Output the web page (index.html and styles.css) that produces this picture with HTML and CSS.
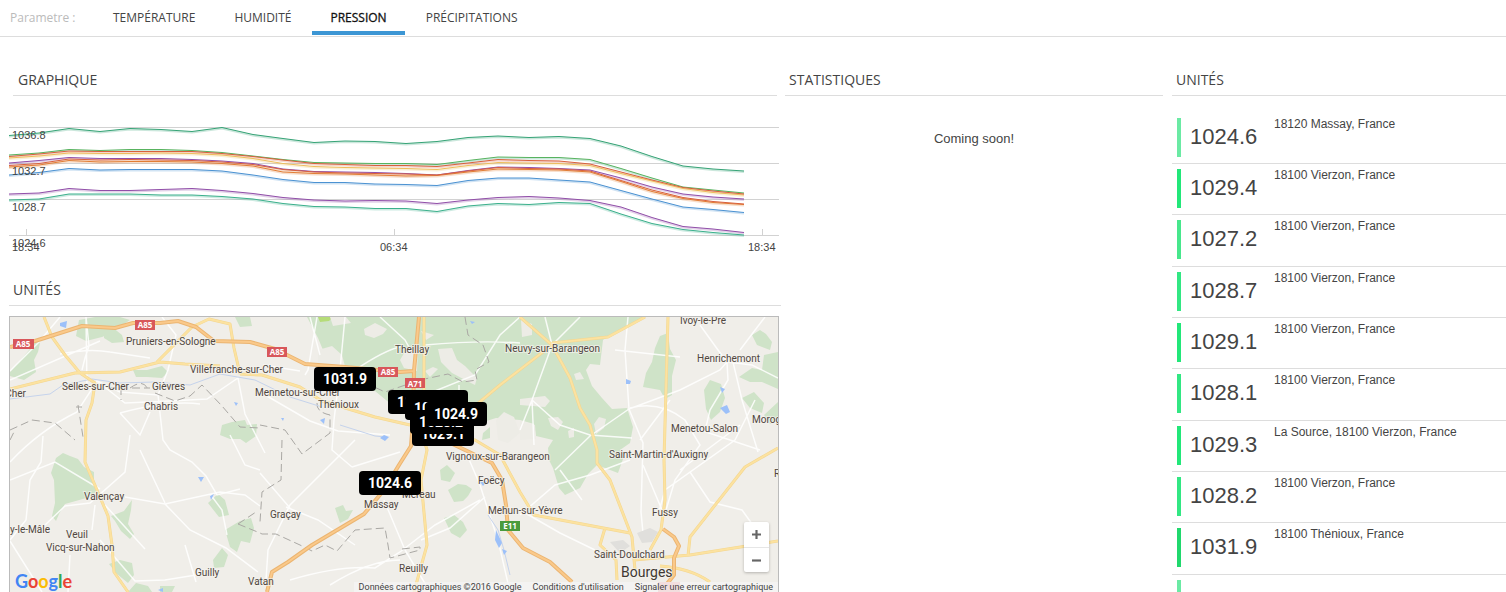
FILE: index.html
```html
<!DOCTYPE html>
<html lang="fr">
<head>
<meta charset="utf-8">
<title>Pression</title>
<link rel="stylesheet" href="styles.css">
</head>
<body>
<nav class="params">
  <span class="params-label">Parametre :</span>
  <div class="tabs">
    <button class="tab" type="button">TEMPÉRATURE</button>
    <button class="tab" type="button">HUMIDITÉ</button>
    <button class="tab tab-active" type="button">PRESSION</button>
    <button class="tab" type="button">PRÉCIPITATIONS</button>
  </div>
</nav>
<main class="board">
  <div class="col-main">
    <section class="panel-chart">
      <h2 class="title title-inset">GRAPHIQUE</h2>
      <svg class="chart" viewBox="9 116 770 144" role="img" aria-label="Pression par unité">
        <defs>
          <path id="s1" d="M9 135.5L39 133L69 128.5L100 131.5L130 128.5L161 129.5L192 131.5L222 127.5L253 134.5L283 138.5L314 142.5L345 141L375 141.5L406 143.5L437 141.5L468 137.5L498 136L529 137.5L559 136.5L590 138.5L621 146L652 156.5L683 166L713 169L744 171"/>
          <path id="s2" d="M9 155L39 153L69 149.5L100 150.5L130 149.5L161 149.5L192 150.5L222 152.5L253 156L283 159.5L314 162.5L345 163L375 163.5L406 163.5L437 164.5L468 160.5L498 157L529 157.5L559 157.5L590 159.5L621 168.5L652 178L683 187L713 190L744 193"/>
          <path id="s3" d="M9 156.5L39 154L69 151L100 151.5L130 151.5L161 151.5L192 151.5L222 153.5L253 156.5L283 160L314 163.5L345 164.5L375 165.5L406 165.5L437 166.5L468 163L498 159.5L529 160.5L559 161L590 164L621 172L652 180L683 187.5L713 191L744 194"/>
          <path id="s4" d="M9 158L39 156L69 153L100 153.5L130 153.5L161 153L192 153.5L222 155L253 158.5L283 163.5L314 166.5L345 167.5L375 168L406 168.5L437 169.5L468 165.5L498 162.5L529 163L559 163.5L590 165.5L621 173.5L652 181L683 188.5L713 192.5L744 195"/>
          <path id="s5" d="M9 163L39 160.5L69 157.5L100 158.5L130 158.5L161 158.5L192 159.5L222 161L253 163.5L283 169L314 171.5L345 172L375 172.5L406 173.5L437 175L468 170.5L498 167L529 167.5L559 168.5L590 170L621 178L652 187L683 194L713 197L744 199"/>
          <path id="s6" d="M9 165.5L39 163.5L69 159L100 160L130 159.5L161 160L192 160.5L222 162L253 164.5L283 169.5L314 172L345 173L375 173.5L406 174L437 175L468 171L498 167.5L529 168.5L559 169L590 171L621 180.5L652 190L683 197.5L713 201.5L744 204"/>
          <path id="s7" d="M9 167L39 165L69 160.5L100 162L130 161.5L161 161.5L192 162L222 163.5L253 166L283 172L314 173.5L345 174L375 175L406 176L437 175.5L468 172L498 169L529 169.5L559 170L590 172L621 181.5L652 191.5L683 198.5L713 202.5L744 204.5"/>
          <path id="s8" d="M9 175L39 172.5L69 168.5L100 170L130 169.5L161 169.5L192 169.5L222 171L253 175L283 179.5L314 182.5L345 182.5L375 184L406 184.5L437 185.5L468 180.5L498 178L529 178L559 180L590 182L621 190.5L652 199L683 207L713 209.5L744 212.5"/>
          <path id="s9" d="M9 194L39 193L69 188.5L100 190.5L130 190.5L161 189.5L192 188.5L222 190.5L253 193.5L283 197.5L314 200L345 201L375 200.5L406 201L437 203.5L468 200L498 197.5L529 196.5L559 198L590 200.5L621 207L652 217.5L683 226.5L713 229L744 232.5"/>
          <path id="s10" d="M9 200L39 199L69 194L100 194L130 194L161 195L192 195L222 196.5L253 199L283 203.5L314 206.5L345 207L375 208.5L406 208.5L437 211.5L468 206L498 203.5L529 204.5L559 202.5L590 203.5L621 214L652 223.5L683 229.5L713 232.5L744 235"/>
        </defs>
        <path class="gridline" d="M9 127.500H779M9 163.500H779M9 199.500H779M9 235.500H779M26.500 229V235M394.500 229V235M762.500 229V235"/>
        <g class="glow">
          <use href="#s1" class="c-green"/><use href="#s2" class="c-green"/><use href="#s3" class="c-red"/><use href="#s4" class="c-yellow"/><use href="#s5" class="c-purple"/><use href="#s6" class="c-orange"/><use href="#s7" class="c-orange"/><use href="#s8" class="c-blue"/><use href="#s9" class="c-purple"/><use href="#s10" class="c-teal"/>
        </g>
        <g class="series">
          <use href="#s1" class="c-green"/><use href="#s2" class="c-lime"/><use href="#s4" class="c-yellow"/><use href="#s3" class="c-red"/><use href="#s5" class="c-purple"/><use href="#s7" class="c-orange"/><use href="#s6" class="c-red"/><use href="#s8" class="c-blue"/><use href="#s9" class="c-purple"/><use href="#s10" class="c-teal"/>
        </g>
        <g class="axis">
          <text x="12" y="139">1036.8</text><text x="12" y="175">1032.7</text><text x="12" y="211">1028.7</text><text x="12" y="247">1024.6</text>
          <text x="12" y="251">18:34</text><text x="380" y="251">06:34</text><text x="748" y="251">18:34</text>
        </g>
      </svg>
    </section>
    <section class="panel-map">
      <h2 class="title">UNITÉS</h2>
      <div class="map">
        <svg class="map-canvas" viewBox="10 317 768 276" preserveAspectRatio="xMidYMin slice" role="img" aria-label="Carte des unités">
          <g class="wood">
            <path d="M307 317L318 338L323 350L317 370L345 388L375 391L392 405L420 425L445 430L480 423L496 418L520 420L534 424L536 436L553 440L548 448L549 460L553 468L559 488L565 495L580 488L588 474L597 465L618 473L623 459L620 450L630 443L633 427L627 408L612 409L602 398L592 386L586 370L590 364L600 365L603 340L609 336L622 330L646 317Z"/>
            <path d="M76 336L79 320L95 317L112 317L119 320L116 331L102 337L86 341ZM10 372L30 349L36 340L40 343L38 352L34 360L36 372L24 380L10 376ZM104 332L112 327L122 335L124 342L112 343L104 338ZM133 370L147 370L162 366L168 372L162 378L147 377L136 377ZM105 317H120L130 320L121 326L110 325Z"/>
            <path d="M220 435L222 425L232 422L245 420L247 425L257 424L256 436L246 443L236 436ZM235 317H250L252 326L240 327Z"/>
            <path d="M51 473L56 458L63 453L70 456L78 459L84 467L94 472L94 484L98 490L90 497L65 504L59 514L56 521L52 516L55 503L54 480ZM111 516L124 511L132 500L131 510L128 524L134 534L130 539L121 531L115 521ZM109 564L120 560L132 563L134 575L128 583L117 574ZM128 592L136 583L148 586L152 592Z"/>
            <path d="M208 503L218 494L225 500L229 515L219 517ZM225 530L240 521L251 518L254 528L250 543L241 541L237 552L230 547ZM213 560L222 548L228 555L224 567L214 568ZM160 586L175 586L172 592H160ZM220 435H252L242 439L230 439Z"/>
            <path d="M440 470L447 465L455 473L450 482L441 480ZM448 490L458 484L466 485L472 489L468 496L463 501L454 502ZM444 518L454 515L463 522L467 530L460 538L451 533ZM335 508L343 505L346 511L353 510L348 519L340 523Z"/>
            <path d="M660 336L668 333L670 349L676 360L672 376L672 395L665 399L660 390L643 387L646 373L652 362L655 348ZM704 390L710 380L721 384L725 398L720 412L711 420L706 409ZM752 335L760 330L766 334L772 342L770 350L757 345ZM739 377L752 368L762 370L764 355L778 352V389L762 382L750 382ZM742 398L754 392L764 403L762 413L750 408ZM764 415L778 402V420L770 424ZM483 433L490 427L490 438L482 440Z"/>
          </g>
          <path class="lime-patch" d="M318 317H333L329 321L320 322Z"/>
          <g class="clearing">
            <path d="M330 317H346L351 323L333 326ZM364 329L375 323L387 329L383 334L374 338L365 335ZM318 350L332 346L342 355L346 370L330 374L318 368ZM400 360L406 350L418 350L417 371L404 368ZM438 349L452 348L457 360L465 366L477 378L475 385L467 381L452 373L441 362ZM425 371L433 367L438 369L430 377ZM421 331L434 335L426 340ZM521 320L532 324L532 335L522 337ZM574 374L580 372L584 379L576 380ZM520 399L545 396L550 401L545 407L520 405ZM520 421L535 425L536 439L520 440ZM548 418L558 417L563 422L558 430L551 426ZM594 424L599 417L606 419L604 428L596 434ZM496 420L504 412L514 417L520 433L508 443L498 440ZM568 431L574 428L574 437L569 438Z"/>
          </g>
          <g class="minor">
            <path d="M86 317L89 346L85 358L82 370M86 317L87 390M162 317L176 335L168 370L158 395L120 392L97 381M10 371L38 343L60 317M60 354Q90 348 110 352L150 358M10 380L100 341M10 462Q40 430 77 412L97 381L125 403L170 401L207 399L238 378L245 414L265 453M120 413Q170 400 200 404M158 395L163 440L170 450L192 462L206 476L217 495L240 489M120 413L140 435L150 412"/>
            <path d="M43 436L41 462L30 480L26 520L10 540M130 435L125 472L90 503L65 506L45 525M10 480L55 462L100 489M95 505L92 530M125 497L165 504L220 492L245 495L260 506M165 504L190 530L226 548L258 572M185 545L196 582M70 555L68 592M100 540L135 581L165 580L196 575M210 494L222 510L227 535M10 541L42 592M140 450L165 503M230 435L245 465L260 470M105 505L145 549"/>
            <path d="M317 317L308 370L305 375M263 365L300 371M345 317L340 370L334 420L332 450L352 467M310 317L320 355M355 370Q385 350 400 347M380 317L392 328L405 340L410 349M425 345Q480 340 520 343M425 395L475 375L500 335L520 317M338 431L310 421L260 392M338 431L390 435M459 385V410M355 440L290 505L268 550L266 580M352 467L400 452M286 507L318 520L355 545M260 473L290 508M290 580Q340 565 375 568L400 552L435 525L480 500M384 500L405 550L430 592M421 540L450 528L485 497M465 450L480 485L488 510L498 540L510 592M330 585Q370 560 400 560"/>
            <path d="M552 345L532 400L520 430M552 345L545 317M552 345L580 317M628 317L625 350L629 409L590 436L555 470M629 409L680 390L720 370L727 362L718 350L700 325M629 409L643 443L641 512L643 533M532 400L560 425L590 435L632 438M630 408Q660 400 685 420L700 445L675 480L666 510M727 362L728 380L710 410L705 431M733 362L742 400L758 452M727 362L752 365L778 378M740 350L765 317M615 350L680 357M532 400L534 445M520 510L560 533L595 550M520 515L555 485L590 475L630 460M690 472L710 502L742 510L760 535M670 400L640 440M755 400L735 440L665 490L658 515M680 470L740 425M700 430L760 450M560 470L582 500M643 465L665 517"/>
          </g>
          <g class="border"><path d="M10 430L32 420L55 423L75 440M78 405L83 437M76 407H82M108 388H150M130 388Q144 378 148 390M155 393L175 401L190 396L202 385L222 406L240 427L260 428M121 387V400M465 317L468 335L483 345L489 362L475 370L477 380L463 382L448 374L420 380L385 392L370 385M317 403Q316 412 330 415L330 433L302 454L285 430L260 425M282 440L281 480L262 492L260 522M238 524L256 512M238 524L260 533L262 534H276L300 545L312 551L325 545L337 551L355 530L385 528L388 545L390 558L420 550L420 547L402 549M10 440L15 430"/></g>
          <g class="river"><path d="M10 399L50 394L63 385L92 379L120 383L154 382L190 385L220 374L255 380L290 397L322 407M488 515L498 530L504 550L510 575M340 425L375 436L386 437"/></g>
          <g class="lake"><path d="M60 323L67 321L66 328L60 326ZM384 435L389 437L385 441L380 438ZM720 408L727 405L730 412L726 414ZM720 387L725 389L722 393ZM626 379L631 381L630 384L626 384ZM198 477L204 477L201 482ZM210 496L214 494L211 500ZM158 590L163 588V592ZM234 402L238 403L236 406ZM281 418L284 418L283 421ZM320 420L325 418L324 424ZM480 482L487 481L483 486ZM496 530L502 543L499 548L495 540ZM502 549L507 551L504 555ZM470 321L475 322L472 324Z"/></g>
          <g class="urban"><path d="M637 533L650 528L658 532L652 542L642 543ZM610 542L623 540L630 546L620 553Z"/></g>
          <g class="road-edge">
            <path id="main-roads" d="M44 317L52 337L65 355L80 373L95 383L92 403L86 420L85 462L97 490L108 516L112 545L114 572L128 592M10 389L75 373L120 372L160 362L185 364L220 366M157 362L192 327L209 319L230 324L234 348L240 374M240 374L262 375L300 387L322 401L375 417L410 425M424 317V400M424 440L427 450L421 480L427 545L414 592M520 317L552 345L570 378L580 408L590 425L597 450L597 463L610 480L632 537L635 570M552 343L608 337L645 317M440 435L500 385L552 345M668 317L664 460L665 500L661 530L650 550M430 437L475 440L500 455L520 492L534 515L630 533M778 448L745 467L690 537L688 556M634 560L690 555L778 541M605 528L600 545L616 560L617 580M660 566Q690 568 710 582"/>
          </g>
          <g class="road-fill"><use href="#main-roads"/></g>
          <g class="mway-edge">
            <path id="motorways" d="M10 347L35 341L82 326L115 328L133 323L160 323L178 321L196 327L214 341L250 342L275 349L305 364L345 367L400 372L414 371L419 317M414 371L413 420L411 446L399 465L384 490L364 514L312 545L288 562L272 572L267 592M440 438L465 450L492 463L502 480L506 505L508 530L523 548L550 562L572 582M663 529L674 537L679 546L674 558L674 575L666 585"/>
          </g>
          <g class="mway-fill"><use href="#motorways"/></g>
          <g class="shield">
            <rect x="135" y="320" width="20" height="10"/><rect x="13" y="339" width="21" height="10"/><rect x="267" y="347" width="20" height="10"/><rect x="378" y="367" width="20" height="10"/><rect x="405" y="378" width="20" height="10"/><rect class="faint" x="658" y="582" width="22" height="10"/>
            <rect class="euro" x="500" y="521" width="20" height="10"/>
            <text x="145" y="328">A85</text><text x="23" y="347">A85</text><text x="277" y="355">A85</text><text x="388" y="375">A85</text><text x="415" y="387">A71</text><text x="510" y="529">E11</text>
          </g>
          <g class="place">
            <text x="126" y="345">Pruniers-en-Sologne</text><text x="190" y="373">Villefranche-sur-Cher</text><text x="62" y="390">Selles-sur-Cher</text><text x="152" y="390">Gièvres</text><text x="144" y="410">Chabris</text><text class="end" x="26" y="397">Cher</text>
            <text x="255" y="396">Mennetou-sur-Cher</text><text x="318" y="408">Thénioux</text><text x="395" y="353">Theillay</text><text x="505" y="352">Neuvy-sur-Barangeon</text><text x="680" y="324">Ivoy-le-Pré</text><text x="697" y="362">Henrichemont</text><text x="671" y="432">Menetou-Salon</text><text x="752" y="423">Morogues</text><text x="609" y="458">Saint-Martin-d'Auxigny</text><text x="446" y="460">Vignoux-sur-Barangeon</text><text x="478" y="484">Foëcy</text><text x="402" y="498">Méreau</text><text x="364" y="508">Massay</text><text x="270" y="518">Graçay</text><text x="84" y="500">Valençay</text><text class="end" x="50" y="533">Luçay-le-Mâle</text><text x="66" y="538">Veuil</text><text x="46" y="551">Vicq-sur-Nahon</text><text x="195" y="576">Guilly</text><text x="248" y="585">Vatan</text><text x="488" y="514">Mehun-sur-Yèvre</text><text x="652" y="516">Fussy</text><text x="594" y="558">Saint-Doulchard</text><text x="399" y="572">Reuilly</text><text x="774" y="477">Rians</text>
            <text class="city" x="621" y="577">Bourges</text>
          </g>
          <g class="pin">
            <g><rect x="314" y="367" width="62" height="24" rx="4"/><text x="345" y="384">1031.9</text></g>
            <g><rect x="388" y="390" width="62" height="24" rx="4"/><text x="419" y="407">1028.7</text></g>
            <g><rect x="406" y="390" width="62" height="24" rx="4"/><text x="437" y="407">1029.4</text></g>
            <g><rect x="405" y="396" width="62" height="24" rx="4"/><text x="436" y="413">1029.3</text></g>
            <g><rect x="412" y="422" width="62" height="24" rx="4"/><text x="443" y="439">1029.1</text></g>
            <g><rect x="410" y="410" width="62" height="24" rx="4"/><text x="441" y="427">1028.2</text></g>
            <g><rect x="425" y="402" width="62" height="24" rx="4"/><text x="456" y="419">1024.9</text></g>
            <g><rect x="359" y="471" width="62" height="24" rx="4"/><text x="390" y="488">1024.6</text></g>
          </g>
        </svg>
        <div class="zoom">
          <button class="zoom-btn" type="button" aria-label="Zoom avant"><svg viewBox="0 0 10 10"><path d="M5 0V10M0 5H10"/></svg></button>
          <button class="zoom-btn" type="button" aria-label="Zoom arrière"><svg viewBox="0 0 10 10"><path d="M0 5H10"/></svg></button>
        </div>
        <div class="map-foot">
          <a class="logo" href="#"><span class="g-blue">G</span><span class="g-red">o</span><span class="g-yellow">o</span><span class="g-blue">g</span><span class="g-green">l</span><span class="g-red">e</span></a>
          <div class="legal"><span>Données cartographiques ©2016 Google</span><a href="#">Conditions d'utilisation</a><a href="#">Signaler une erreur cartographique</a></div>
        </div>
      </div>
    </section>
  </div>
  <section class="col-stats">
    <h2 class="title">STATISTIQUES</h2>
    <p class="soon">Coming soon!</p>
  </section>
  <section class="col-units">
    <h2 class="title">UNITÉS</h2>
    <ul class="units">
      <li class="unit"><span class="bar b1"></span><span class="value">1024.6</span><span class="address">18120 Massay, France</span></li>
      <li class="unit"><span class="bar b4"></span><span class="value">1029.4</span><span class="address">18100 Vierzon, France</span></li>
      <li class="unit"><span class="bar b2"></span><span class="value">1027.2</span><span class="address">18100 Vierzon, France</span></li>
      <li class="unit"><span class="bar b3"></span><span class="value">1028.7</span><span class="address">18100 Vierzon, France</span></li>
      <li class="unit"><span class="bar b4"></span><span class="value">1029.1</span><span class="address">18100 Vierzon, France</span></li>
      <li class="unit"><span class="bar b3"></span><span class="value">1028.1</span><span class="address">18100 Vierzon, France</span></li>
      <li class="unit"><span class="bar b4"></span><span class="value">1029.3</span><span class="address">La Source, 18100 Vierzon, France</span></li>
      <li class="unit"><span class="bar b3"></span><span class="value">1028.2</span><span class="address">18100 Vierzon, France</span></li>
      <li class="unit"><span class="bar b5"></span><span class="value">1031.9</span><span class="address">18100 Thénioux, France</span></li>
      <li class="unit"><span class="bar b1"></span></li>
    </ul>
  </section>
</main>
</body>
</html>
```
FILE: styles.css
```css
* { box-sizing: border-box; }

body {
  margin: 0;
  height: 100vh;
  overflow: hidden;
  background: #fff;
  color: #444;
  font: 12px "Liberation Sans", Arial, sans-serif;
}

.params {
  display: flex;
  height: 37px;
  padding-left: 10px;
  border-bottom: 1px solid #ddd;
  font-family: "Open Sans", sans-serif;
}
.params-label { width: 85px; line-height: 35px; color: #bbb; }
.tabs { display: flex; gap: 3px; }
.tab {
  height: 35px;
  padding: 4px 18px 0;
  border: 0;
  border-bottom: 4px solid transparent;
  background: none;
  color: #444;
  font: 12px "Open Sans", sans-serif;
}
.tab-active { border-color: #3c96d4; color: #111; -webkit-text-stroke: 0.3px #111; }

.board {
  display: grid;
  grid-template-columns: 781fr 382fr 343fr;
  padding-top: 28px;
}
.title {
  margin: 0;
  height: 31px;
  padding-left: 4px;
  border-bottom: 1px solid #ddd;
  color: #444;
  font: 14px/30px "Open Sans", sans-serif;
}
.title-inset { margin: 0 4px; padding-left: 5px; }

.col-main { display: flex; flex-direction: column; gap: 15px; padding-left: 9px; }
.panel-chart { display: flex; flex-direction: column; gap: 20px; }
.chart { display: block; width: calc(100% - 2px); }
.gridline { fill: none; stroke: #d2d2d2; shape-rendering: crispEdges; }
.series, .glow { fill: none; stroke-width: 1; }
.glow { stroke-width: 2; opacity: 0.25; transform: translateY(1px); }
.c-green { stroke: #36a376; }
.c-lime { stroke: #58b35f; }
.c-red { stroke: #d9603c; }
.c-yellow { stroke: #eebd5b; }
.c-purple { stroke: #914fa9; }
.c-orange { stroke: #e27e35; }
.c-blue { stroke: #4b92d2; }
.c-teal { stroke: #3bb08c; }
.axis { fill: #444; font-size: 11px; }

.panel-map .title { margin-bottom: 10px; }
.map {
  position: relative;
  margin-right: 2px;
  border: 1px solid #bbb;
  background: #f0eee9;
  overflow: hidden;
}
.map-canvas { display: block; width: 100%; }
.wood { fill: #cfe3c8; }
.clearing { fill: #edece6; }
.lime-patch { fill: #b5dc78; }
.minor path { fill: none; stroke: #fff; stroke-width: 1.5; stroke-opacity: 0.85; }
.border path { fill: none; stroke: #aaa8a4; stroke-dasharray: 8 4; }
.river path { fill: none; stroke: #c5d3ec; }
.lake { fill: #9cc0f9; }
.urban { fill: #e0dfdc; }
.road-edge, .road-fill, .mway-edge, .mway-fill { fill: none; stroke-linejoin: round; }
.road-edge { stroke: #f3d68f; stroke-width: 3; }
.road-fill { stroke: #fce2a0; stroke-width: 2; }
.road-edge path, .mway-edge path { stroke: inherit; }
.mway-edge { stroke: #ebb572; stroke-width: 4; }
.mway-fill { stroke: #fac98a; stroke-width: 2; }
#main-roads, #motorways { stroke: inherit; stroke-width: inherit; }
.shield { font: bold 8px "Open Sans", sans-serif; }
.shield rect { fill: #d8575b; }
.shield .faint { fill: #eba9a8; }
.shield .euro { fill: #4b9b3c; }
.shield text { fill: #fff; text-anchor: middle; }
.place {
  fill: #4f4640;
  stroke: #f5f3ee;
  stroke-width: 2;
  stroke-opacity: 0.7;
  paint-order: stroke;
  font: 10px Roboto, sans-serif;
}
.place .end { text-anchor: end; }
.place .city { fill: #403833; font-size: 14px; }
.pin rect { fill: #000; }
.pin text { fill: #fff; font: bold 14px Roboto, sans-serif; text-anchor: middle; }

.zoom {
  position: absolute;
  right: 9px;
  bottom: 21px;
  display: flex;
  flex-direction: column;
  width: 25px;
  background: #fff;
  border-radius: 2px;
  box-shadow: 0 1px 3px rgba(0, 0, 0, 0.25);
}
.zoom-btn {
  display: flex;
  align-items: center;
  justify-content: center;
  height: 25px;
  padding: 0;
  border: 0;
  background: none;
}
.zoom-btn + .zoom-btn { border-top: 1px solid #e6e6e6; }
.zoom-btn svg { width: 9px; stroke: #666; stroke-width: 2.4; }
.map-foot {
  position: absolute;
  left: 0;
  right: 0;
  bottom: 0;
  display: flex;
  align-items: flex-end;
  justify-content: space-between;
}
.logo {
  padding: 0 0 2px 5px;
  font: bold 18px/20px Lato, sans-serif;
  text-decoration: none;
}
.g-blue { color: #4285f4; }
.g-red { color: #ea4335; }
.g-yellow { color: #fbbc05; }
.g-green { color: #34a853; }
.legal {
  display: flex;
  gap: 11px;
  padding: 0 5px;
  background: rgba(245, 245, 245, 0.7);
  color: #444;
  font: 9px/11px Roboto, sans-serif;
}
.legal a { color: #444; text-decoration: none; }

.col-stats { padding-left: 4px; }
.col-units { padding-left: 9px; }
.soon { margin: 35px 0 0; text-align: center; font-size: 13px; }
.units { margin: 17px 0 0; padding: 0; list-style: none; }
.unit {
  display: flex;
  height: 51px;
  padding: 5px;
  border-bottom: 1px solid #ddd;
}
.unit:nth-child(3n) { height: 52px; }
.bar { width: 4px; height: 39px; }
.b1 { background: #6beaa4; }
.b2 { background: #47e78c; }
.b3 { background: #32e783; }
.b4 { background: #22e779; }
.b5 { background: #20d86d; }
.value { width: 93px; padding-left: 9px; font-size: 22px; line-height: 38px; }
.address { line-height: 12px; }
```
